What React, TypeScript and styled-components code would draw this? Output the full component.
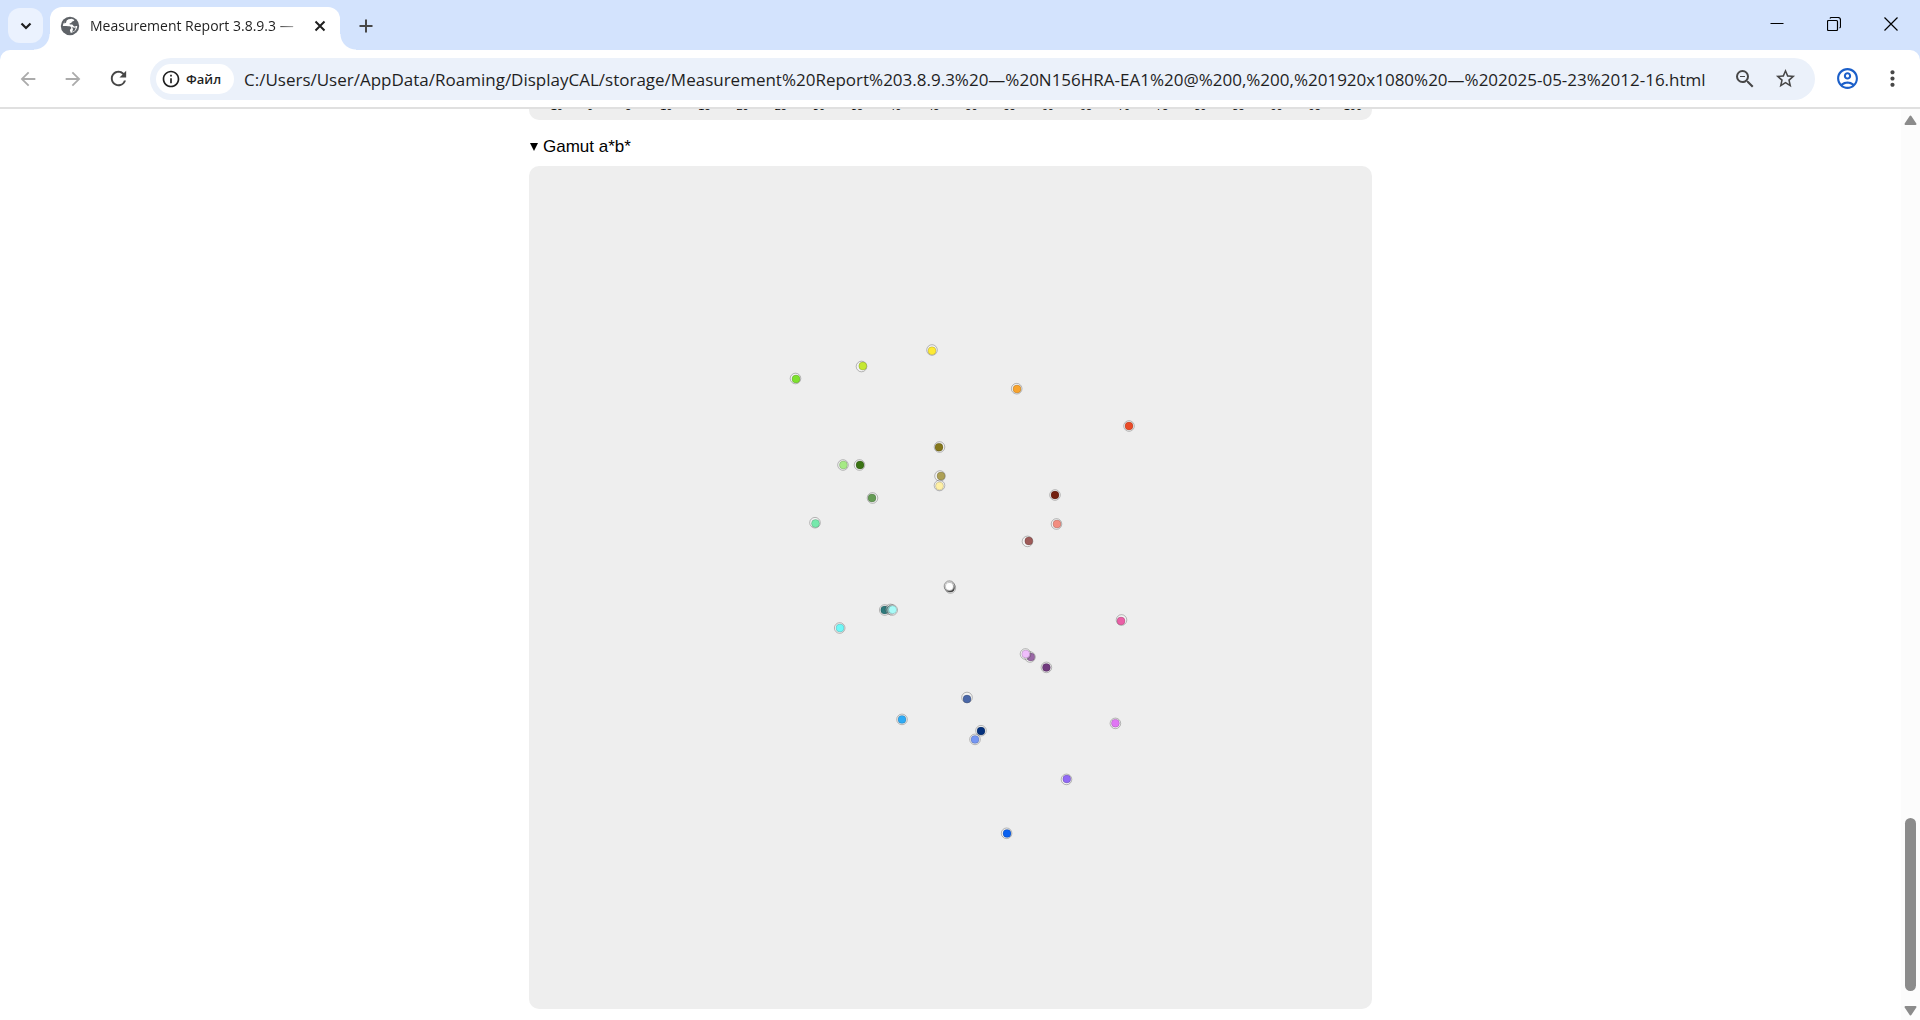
import React from "react";
import styled, { createGlobalStyle } from "styled-components";
import {
  MdArrowBack,
  MdArrowForward,
  MdInfoOutline,
  MdMoreVert,
  MdOutlineAccountCircle,
  MdRefresh,
  MdStarOutline,
  MdZoomOut,
} from "react-icons/md";

const uiFont = `"Segoe UI", "Open Sans", "Noto Sans", sans-serif`;

const GlobalStyle = createGlobalStyle`
  *, *::before, *::after { box-sizing: border-box; }
  body { margin: 0; background: #ffffff; font-family: ${uiFont}; color: #1f1f1f; }
`;

const Window = styled.div`
  display: flex;
  flex-direction: column;
  height: 100vh;
  overflow: hidden;
  background: #d3e3fd;
`;

const TabStrip = styled.header`
  display: flex;
  align-items: flex-end;
  flex: none;
  height: 50px;
  padding-left: 8px;
`;

const IconButton = styled.button<{ $size: number; $color?: string }>`
  display: flex;
  align-items: center;
  justify-content: center;
  flex: none;
  width: ${(p) => p.$size}px;
  height: ${(p) => p.$size}px;
  padding: 0;
  border: 0;
  border-radius: 12px;
  background: transparent;
  color: ${(p) => p.$color ?? "#474747"};
`;

const TabSearch = styled(IconButton)`
  align-self: flex-start;
  margin-top: 8px;
  background: #ebf2fe;
`;

const Tab = styled.div`
  position: relative;
  display: flex;
  align-items: center;
  width: 290px;
  height: 43px;
  margin-left: 7px;
  padding: 0 8px 6px 10px;
  border-radius: 12px 12px 0 0;
  background: #ffffff;

  &::before,
  &::after {
    content: "";
    position: absolute;
    bottom: 0;
    width: 16px;
    height: 16px;
  }
  &::before {
    right: 100%;
    background: radial-gradient(circle at 0 0, transparent 15px, #ffffff 16px);
  }
  &::after {
    left: 100%;
    background: radial-gradient(circle at 100% 0, transparent 15px, #ffffff 16px);
  }
`;

const TabTitle = styled.span`
  flex: 1;
  min-width: 0;
  margin-left: 10px;
  overflow: hidden;
  font-size: 14px;
  line-height: 20px;
  white-space: nowrap;
  mask-image: linear-gradient(90deg, #000 85%, transparent);
`;

const NewTab = styled(IconButton)`
  margin: 0 0 7px 8px;
`;

const WindowControls = styled.div`
  display: flex;
  align-self: stretch;
  margin-left: auto;
`;

const WindowButton = styled.button`
  display: flex;
  align-items: center;
  justify-content: center;
  width: 57px;
  padding: 0 2px 2px 0;
  border: 0;
  background: transparent;
  color: #000000;
`;

const Toolbar = styled.div`
  display: flex;
  align-items: center;
  flex: none;
  height: 59px;
  padding: 0 10px;
  border-bottom: 2px solid #e0e0e0;
  border-radius: 10px 10px 0 0;
  background: #ffffff;
`;

const NavButtons = styled.nav`
  display: flex;
  gap: 9px;
  margin-right: 14px;
`;

const AddressBar = styled.div`
  display: flex;
  align-items: center;
  flex: 1;
  min-width: 0;
  height: 42px;
  margin-right: 14px;
  padding: 0 12px 0 6px;
  border-radius: 21px;
  background: #ebf1fa;
`;

const FileChip = styled.button`
  display: flex;
  align-items: center;
  gap: 5px;
  flex: none;
  width: 78px;
  height: 30px;
  padding: 0 0 0 5px;
  border: 0;
  border-radius: 15px;
  background: #ffffff;
  color: #1f1f1f;
  font: 600 13px/20px ${uiFont};
`;

const AddressInput = styled.input`
  flex: 1;
  min-width: 0;
  padding: 2px 0 0 10px;
  border: 0;
  outline: 0;
  background: transparent;
  color: #1f1f1f;
  font: 17px/24px ${uiFont};
`;

const AddressActions = styled.div`
  display: flex;
  gap: 4px;
`;

const ToolbarEnd = styled.div`
  display: flex;
  gap: 9px;
`;

const Viewport = styled.div`
  display: flex;
  flex: 1;
  min-height: 0;
  background: #ffffff;
`;

const Report = styled.main`
  flex: 1;
  min-width: 0;
  overflow: hidden;
  font-family: Arial, "Liberation Sans", sans-serif;
  color: #000000;
`;

const ReportColumn = styled.div`
  width: min(843px, 100%);
  margin: 0 auto;
`;

const PreviousChart = styled.section`
  height: 11px;
  border-radius: 0 0 10px 10px;
  background: #eeeeee;
`;

const AxisRow = styled.div`
  display: flex;
  align-items: flex-end;
  height: 1px;
  overflow: hidden;
  font-size: 11px;
  line-height: 8px;
  text-align: center;
`;

const AxisOrigin = styled.span`
  width: 42px;
  padding-right: 8px;
  text-align: right;
`;

const AxisLabel = styled.span`
  flex: 1;
`;

const Gamut = styled.details`
  margin-top: 17px;
`;

const GamutHeading = styled.summary`
  display: flex;
  align-items: center;
  gap: 5px;
  height: 20px;
  margin-bottom: 9px;
  padding-left: 1px;
  font-size: 17px;
  line-height: 20px;
  list-style: none;
`;

const Triangle = styled.span`
  border: 4px solid transparent;
  border-top: 8px solid #000000;
  border-bottom: 0;
`;

const GamutChart = styled.svg`
  display: block;
  width: 100%;
  border-radius: 10px;
  background: #eeeeee;
`;

const ScrollTrack = styled.div`
  display: flex;
  flex-direction: column;
  align-items: center;
  flex: none;
  width: 19px;
  padding: 6px 0 4px;
  background: #fcfcfc;
`;

const ScrollSpace = styled.div<{ $grow: number }>`
  flex: ${(p) => p.$grow} 1 0;
`;

const ScrollThumb = styled.div`
  flex: 173 1 0;
  width: 11px;
  border-radius: 6px;
  background: #8b8b8b;
`;

/* target x, target y, measured x, measured y, colour */
type Sample = [number, number, number, number, string];

const samples: Sample[] = [
  [266.5, 212.5, 267, 213, "#7ee22e"],
  [332.5, 200.5, 333.8, 200, "#c5e832"],
  [403, 184, 403, 184.8, "#fdea35"],
  [410.5, 281, 410, 281.2, "#85771b"],
  [314, 299, 314.4, 299, "#a6ea85"],
  [330.5, 299, 331, 299, "#3a7313"],
  [411, 310, 412, 310, "#ada055"],
  [410.5, 319.5, 410.5, 320, "#fff0a5"],
  [343.5, 332, 343, 332, "#659c55"],
  [286, 356.7, 286.5, 357.5, "#76e9ac"],
  [487.7, 222.7, 488, 223, "#f8a42e"],
  [600, 260, 600, 260, "#ea4b27"],
  [526, 329, 526, 329, "#73200f"],
  [527.5, 358, 528, 358, "#f28d80"],
  [498.5, 375.4, 499.8, 375, "#9e5a58"],
  [421.4, 422, 421.4, 422, "#151515"],
  [420.7, 420.7, 420.7, 420.7, "#8b8b8b"],
  [420.4, 420, 420.4, 420.4, "#ffffff"],
  [355.7, 444, 355.7, 444, "#2e7a7c"],
  [361.5, 443.4, 361.8, 443.4, "#6aa9a9"],
  [363.2, 444, 363.7, 443.7, "#a9fbf8"],
  [310.7, 462, 311, 462, "#70f8f8"],
  [438, 531.5, 438, 533, "#4a67a8"],
  [373, 553.4, 373, 553.4, "#2fabf5"],
  [452, 564.7, 452, 565, "#03307c"],
  [446, 573.4, 446, 573.4, "#7596f3"],
  [592.5, 454, 592, 455, "#ea5fa6"],
  [501, 491, 501.8, 491, "#9a68a6"],
  [496.5, 488, 496.8, 488, "#efbdfb"],
  [517.4, 501.4, 517.4, 501.4, "#703a7d"],
  [586.4, 557.4, 586.4, 557.2, "#e076f4"],
  [537.5, 613.4, 537.8, 613, "#9169f5"],
  [477.6, 667.3, 478, 667.4, "#0a61f0"],
];

const address =
  "C:/Users/User/AppData/Roaming/DisplayCAL/storage/Measurement%20Report%203.8.9.3%20—%20N156HRA-EA1%20@%200,%200,%201920x1080%20—%202025-05-23%2012-16.html";

const axisValues = Array.from({ length: 21 }, (_, i) => i * 5);

function Stroke({ d, size, width }: { d: string; size: number; width: number }) {
  return (
    <svg width={size} height={size} viewBox={`0 0 ${size} ${size}`} fill="none" stroke="currentColor" strokeWidth={width}>
      <path d={d} />
    </svg>
  );
}

function Globe() {
  return (
    <svg width="20" height="20" viewBox="0 0 20 20">
      <circle cx="10" cy="10" r="9.200" fill="#5f6368" />
      <path d="M11.500 2.800c1 .2 2 .6 2.800 1.200-.2 1-1 1.300-1.900 1.400-.8.100-.6 1.300-1.500 1.500-.8.200-1.400.3-1.300 1.100.1.900 1.400.5 2.400.6 1 .1 1.200 1.700 2.300 1.800 1 .1 1.700-.6 3-.5-.2 2.500-1.600 4.900-3.900 6.200-.9.500-1.800.8-2.700.9.200-1.200-.9-1.500-.8-2.700.1-1.100 1.500-1.300 1.400-2.500-.1-1.300-1.500-1.600-2.900-1.600-1.700 0-3.400-.3-5.600-.2.200-3 2.100-5.500 4.800-6.600z" fill="#fff" />
      <path d="M8.300 2.600c-.3 1.500-2 1.600-2 3.100 0 1.300-1.200 1.400-2.300 1.500l1-3.200zM11.800 10.500c.8 1.200 2.200 1.300 4 1.100l-1 2.900-2.600 1.600c-.1-1.200 1-2 .7-3.100-.2-.9-.9-1.600-1.100-2.500z" fill="#5f6368" />
    </svg>
  );
}

function ScrollArrow({ up }: { up?: boolean }) {
  return (
    <svg width="13" height="10" viewBox="0 0 13 10" fill="#8b8b8b" stroke="#8b8b8b" strokeWidth="2" strokeLinejoin="round">
      <path d={up ? "M6.5 1.5 1.500 9h10z" : "M6.500 8.500 1.500 1h10z"} />
    </svg>
  );
}

export default function App() {
  return (
    <Window>
      <GlobalStyle />
      <TabStrip>
        <TabSearch $size={35} $color="#1f1f1f" aria-label="Search tabs">
          <Stroke d="M2.500 4.500 7 9l4.500-4.500" size={14} width={2.2} />
        </TabSearch>
        <Tab>
          <Globe />
          <TabTitle>Measurement Report 3.8.9.3 —</TabTitle>
          <IconButton $size={24} $color="#1f1f1f" aria-label="Close tab">
            <Stroke d="M2.500 2.500l9 9m0-9l-9 9" size={14} width={2} />
          </IconButton>
        </Tab>
        <NewTab $size={35} aria-label="New tab">
          <Stroke d="M7 .5v13M.5 7h13" size={14} width={2} />
        </NewTab>
        <WindowControls>
          <WindowButton aria-label="Minimize">
            <Stroke d="M.5 6.500h13" size={14} width={1} />
          </WindowButton>
          <WindowButton aria-label="Restore">
            <Stroke d="M.5 4.500a1 1 0 0 1 1-1h8a1 1 0 0 1 1 1v8a1 1 0 0 1-1 1h-8a1 1 0 0 1-1-1zM3 1.500a2 2 0 0 1 1-1h7a2.500 2.500 0 0 1 2.500 2.500v7a2 2 0 0 1-1 1" size={14} width={1.2} />
          </WindowButton>
          <WindowButton aria-label="Close">
            <Stroke d="M.5.5l13 13m0-13l-13 13" size={14} width={1.2} />
          </WindowButton>
        </WindowControls>
      </TabStrip>

      <Toolbar>
        <NavButtons>
          <IconButton $size={36} $color="#ababab" aria-label="Back">
            <MdArrowBack size={22} />
          </IconButton>
          <IconButton $size={36} $color="#ababab" aria-label="Forward">
            <MdArrowForward size={22} />
          </IconButton>
          <IconButton $size={36} aria-label="Reload">
            <MdRefresh size={23} />
          </IconButton>
        </NavButtons>
        <AddressBar>
          <FileChip>
            <MdInfoOutline size={20} />
            Файл
          </FileChip>
          <AddressInput aria-label="Address" defaultValue={address} spellCheck={false} />
          <AddressActions>
            <IconButton $size={36} aria-label="Zoom">
              <MdZoomOut size={24} />
            </IconButton>
            <IconButton $size={36} aria-label="Bookmark">
              <MdStarOutline size={23} />
            </IconButton>
          </AddressActions>
        </AddressBar>
        <ToolbarEnd>
          <IconButton $size={36} $color="#1b5fc9" aria-label="Profile">
            <MdOutlineAccountCircle size={25} />
          </IconButton>
          <IconButton $size={36} aria-label="Menu">
            <MdMoreVert size={25} />
          </IconButton>
        </ToolbarEnd>
      </Toolbar>

      <Viewport>
        <Report>
          <ReportColumn>
            <PreviousChart>
              <AxisRow>
                <AxisOrigin>-10</AxisOrigin>
                {axisValues.map((v) => (
                  <AxisLabel key={v}>{v}</AxisLabel>
                ))}
              </AxisRow>
            </PreviousChart>
            <Gamut open>
              <GamutHeading>
                <Triangle />
                Gamut a*b*
              </GamutHeading>
              <GamutChart viewBox="0 0 843 843" role="img" aria-label="Gamut a*b*">
                {samples.map(([tx, ty, mx, my, color], i) => (
                  <g key={i}>
                    <circle cx={tx} cy={ty} r="5.3" fill="#fff" fillOpacity=".3" stroke="#000" strokeOpacity=".25" />
                    <circle cx={mx} cy={my} r="4" fill={color} stroke="#000" strokeOpacity=".15" />
                  </g>
                ))}
              </GamutChart>
            </Gamut>
          </ReportColumn>
        </Report>
        <ScrollTrack>
          <ScrollArrow up />
          <ScrollSpace $grow={693} />
          <ScrollThumb />
          <ScrollSpace $grow={15} />
          <ScrollArrow />
        </ScrollTrack>
      </Viewport>
    </Window>
  );
}
